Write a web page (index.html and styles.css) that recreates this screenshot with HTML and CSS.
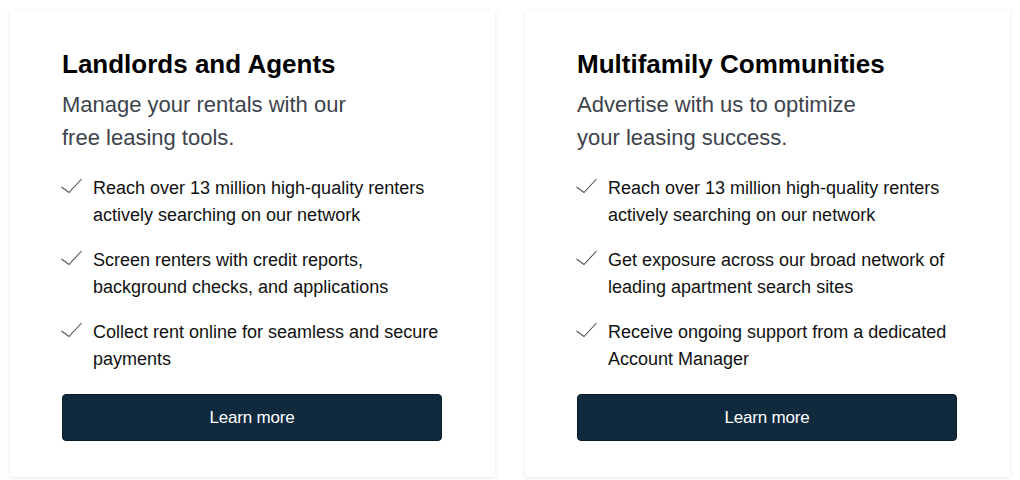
FILE: index.html
```html
<!DOCTYPE html>
<html>
<head>
<meta charset="utf-8">
<link rel="stylesheet" href="styles.css">
</head>
<body>
<div class="cards">
  <div class="card">
    <h2 class="title">Landlords and Agents</h2>
    <p class="subtitle">Manage your rentals with our<br>free leasing tools.</p>
    <ul class="list">
      <li class="item"><svg class="check" viewBox="0 0 21 16"><path d="M0.5 9 L8 14.5 L20.5 1"/></svg><span>Reach over 13 million high-quality renters actively searching on our network</span></li>
      <li class="item"><svg class="check" viewBox="0 0 21 16"><path d="M0.5 9 L8 14.5 L20.5 1"/></svg><span>Screen renters with credit reports, background checks, and applications</span></li>
      <li class="item"><svg class="check" viewBox="0 0 21 16"><path d="M0.5 9 L8 14.5 L20.5 1"/></svg><span>Collect rent online for seamless and secure payments</span></li>
    </ul>
    <a class="btn">Learn more</a>
  </div>
  <div class="card">
    <h2 class="title">Multifamily Communities</h2>
    <p class="subtitle">Advertise with us to optimize<br>your leasing success.</p>
    <ul class="list">
      <li class="item"><svg class="check" viewBox="0 0 21 16"><path d="M0.5 9 L8 14.5 L20.5 1"/></svg><span>Reach over 13 million high-quality renters actively searching on our network</span></li>
      <li class="item"><svg class="check" viewBox="0 0 21 16"><path d="M0.5 9 L8 14.5 L20.5 1"/></svg><span>Get exposure across our broad network of leading apartment search sites</span></li>
      <li class="item"><svg class="check" viewBox="0 0 21 16"><path d="M0.5 9 L8 14.5 L20.5 1"/></svg><span>Receive ongoing support from a dedicated Account Manager</span></li>
    </ul>
    <a class="btn">Learn more</a>
  </div>
</div>
</body>
</html>
```
FILE: styles.css
```css
* { box-sizing: border-box; }
html, body { margin: 0; background: #ffffff; }
body {
  font-family: "Liberation Sans", Arial, sans-serif;
  padding: 10px;
}
.cards {
  display: grid;
  grid-template-columns: 485px 485px;
  column-gap: 30px;
}
.card {
  background: #fff;
  height: 467px;
  padding: 39px 53px 36px 52px;
  box-shadow: 0 1px 4px rgba(0,0,0,0.10);
  border-radius: 2px;
  display: flex;
  flex-direction: column;
}
.title {
  margin: 0;
  font-size: 26px;
  line-height: 30px;
  font-weight: bold;
  color: #000;
}
.subtitle {
  margin: 9px 0 0;
  font-size: 22px;
  line-height: 33px;
  color: #3d434d;
}
.list {
  list-style: none;
  margin: 21px 0 0;
  padding: 0;
}
.item {
  display: flex;
  font-size: 18px;
  line-height: 27px;
  color: #111;
  margin-bottom: 18px;
}
.check {
  flex: none;
  width: 21px;
  height: 16px;
  margin: 3px 11px 0 -1px;
  fill: none;
  stroke: #555;
  stroke-width: 1.1;
}
.btn {
  display: flex;
  align-items: center;
  justify-content: center;
  height: 47px;
  margin-top: auto;
  background: #0f2a3d;
  color: #fff;
  border: 1px solid #0a1c29;
  border-radius: 4px;
  font-size: 17px;
  letter-spacing: -0.2px;
}
```
